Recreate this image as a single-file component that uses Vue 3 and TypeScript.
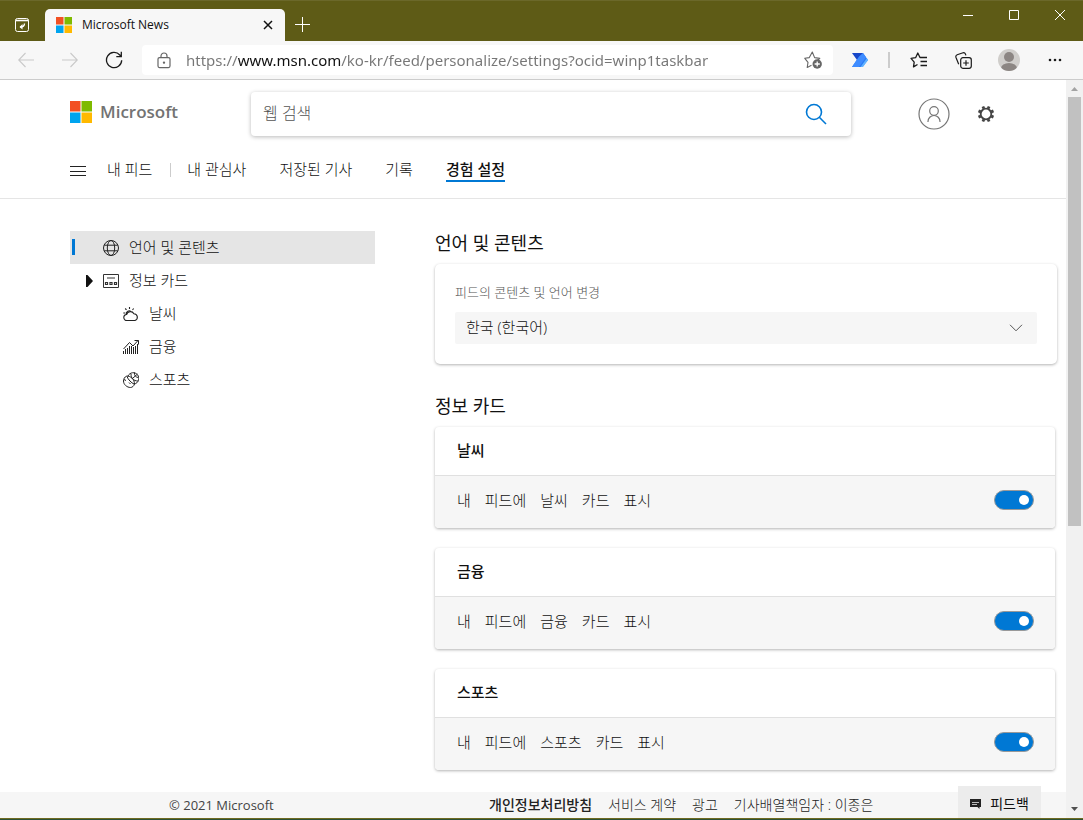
<script setup lang="ts">
import { ref } from 'vue'

interface InfoCard {
  id: string
  title: string
  words: string[]
  enabled: boolean
}

const address = ref('https://www.msn.com/ko-kr/feed/personalize/settings?ocid=winp1taskbar')
const query = ref('')
const region = ref('ko-kr')

const cards = ref<InfoCard[]>([
  { id: 'weather', title: '날씨', words: ['내', '피드에', '날씨', '카드', '표시'], enabled: true },
  { id: 'finance', title: '금융', words: ['내', '피드에', '금융', '카드', '표시'], enabled: true },
  { id: 'sports', title: '스포츠', words: ['내', '피드에', '스포츠', '카드', '표시'], enabled: true },
])
</script>

<template>
  <div class="window">
    <header class="titlebar">
      <button class="tab-actions" type="button" aria-label="탭 작업">
        <svg width="16" height="16" viewBox="0 0 16 16" fill="none" stroke="#fff">
          <rect x="1.5" y="1.5" width="13" height="13" rx="2" />
          <path d="M1.5 3.500h13" stroke-width="1.6" />
          <path d="M10.500 6.500q0 3.500-4.500 3.500" stroke-width="1.400" />
          <path d="M8.500 7 5.500 10l3 2.500z" fill="#fff" stroke="none" />
        </svg>
      </button>
      <div class="tab">
        <svg width="16" height="16" viewBox="0 0 16 16">
          <path fill="#f25022" d="M0 0h7.5v7.5H0z" /><path fill="#7fba00" d="M8.5 0H16v7.5H8.5z" />
          <path fill="#00a4ef" d="M0 8.5h7.5V16H0z" /><path fill="#ffb900" d="M8.5 8.5H16V16H8.5z" />
        </svg>
        <span class="tab-title">Microsoft News</span>
        <button type="button" class="tab-close" aria-label="탭 닫기">
          <svg width="10" height="10" viewBox="0 0 10 10" stroke="#111" stroke-width="1.5"><path d="m1 1 8 8M9 1 1 9" /></svg>
        </button>
      </div>
      <button type="button" class="new-tab" aria-label="새 탭">
        <svg width="15" height="15" viewBox="0 0 15 15" stroke="#fff"><path d="M7.5 0v15M0 7.5h15" /></svg>
      </button>
      <div class="window-controls">
        <button type="button" aria-label="최소화">
          <svg width="10" height="10" viewBox="0 0 10 10" stroke="#fff"><path d="M0 5.5h10" /></svg>
        </button>
        <button type="button" aria-label="최대화">
          <svg width="10" height="10" viewBox="0 0 10 10" stroke="#fff" fill="none"><path d="M.5.5h9v9h-9z" /></svg>
        </button>
        <button type="button" aria-label="닫기">
          <svg width="10" height="10" viewBox="0 0 10 10" stroke="#fff"><path d="m0 0 10 10M10 0 0 10" /></svg>
        </button>
      </div>
    </header>

    <div class="toolbar">
      <button type="button" class="tool" aria-label="뒤로" disabled>
        <svg width="16" height="16" viewBox="0 0 16 16" fill="none" stroke="#c9c9c9" stroke-width="1.1"><path d="M16 8H.8M7.5 1 .7 8l6.8 7" /></svg>
      </button>
      <button type="button" class="tool" aria-label="앞으로" disabled>
        <svg width="16" height="16" viewBox="0 0 16 16" fill="none" stroke="#c9c9c9" stroke-width="1.1"><path d="M0 8h15.2M8.5 1l6.8 7-6.8 7" /></svg>
      </button>
      <button type="button" class="tool" aria-label="새로 고침">
        <svg width="18" height="18" viewBox="0 0 18 18" fill="none" stroke="#1b1b1b" stroke-width="1.3"><path d="M16.7 9.3A7.6 7.6 0 1 1 14.8 4l1.2 1.4M16.3.8v4.9h-5" /></svg>
      </button>
      <div class="address">
        <svg width="14" height="17" viewBox="0 0 14 17" fill="none" stroke="#666" stroke-width="1.2">
          <rect x="1" y="5.6" width="12" height="10" rx="1.5" /><path d="M4 5.5V4a3 3 0 0 1 6 0v1.5" />
          <circle cx="7" cy="10.6" r=".6" fill="#444" />
        </svg>
        <input v-model="address" type="text" aria-label="주소" spellcheck="false" />
        <button type="button" class="favorite" aria-label="즐겨찾기에 추가">
          <svg width="18" height="18" viewBox="0 0 18 18" fill="none" stroke="#666" stroke-width="1.1">
            <path d="m7.5 14.3-4.3 2.2.8-5.1L.8 7.3l4.5-.7L8.3 1l2.3 5.6 5.2.8-2.2 1.8" stroke-linejoin="round" />
            <circle cx="13.2" cy="13" r="4.7" fill="#666" stroke="none" /><path d="M13.2 10.4v5.2M10.6 13h5.2" stroke="#fff" stroke-width="1.3" />
          </svg>
        </button>
      </div>
      <div class="tools-right">
        <button type="button" class="tool" aria-label="확장">
          <svg width="16" height="14" viewBox="0 0 16 14">
            <path fill="#2a7cf6" d="M4.7 7 8.5 0H11l5 7-5.5 7H0z" /><path fill="#62b3ff" d="m8.5 14 6.3-8.8L16 7l-5 7z" />
            <path fill="#1747c9" d="M0 0h11L8 4.5 5 7z" /><path fill="#3f8cff" d="m7 3.5 4-3.5 3 4.2L7 14H0z" />
          </svg>
        </button>
        <span class="separator"></span>
        <button type="button" class="tool" aria-label="즐겨찾기">
          <svg width="18" height="16" viewBox="0 0 18 16" fill="none" stroke="#1b1b1b" stroke-width="1.3" stroke-linejoin="round">
            <path d="m7.5 12.5-4 2.4.7-4.8L1 6.4l4.6-.7L7.8 1 10 5.5h7M10.5 9.5H17M10.5 13.5H17" />
          </svg>
        </button>
        <button type="button" class="tool" aria-label="컬렉션">
          <svg width="17" height="17" viewBox="0 0 17 17" fill="none" stroke="#1b1b1b" stroke-width="1.2">
            <rect x="5.7" y="5.7" width="10.6" height="10.6" rx="2.2" /><path d="M11 8.2v5.6M8.2 11h5.6" />
            <path d="M3.7 12.3 1 5.5Q.3 3.500 2.2 2.700L8 .8q1.700-.5 2.400 1.100l.5 1.500" />
          </svg>
        </button>
        <button type="button" class="tool wide" aria-label="프로필">
          <svg width="22" height="22" viewBox="0 0 22 22">
            <defs><clipPath id="avatar"><circle cx="11" cy="11" r="11" /></clipPath></defs>
            <g clip-path="url(#avatar)"><path fill="#d0cecb" d="M0 0h22v22H0z" /><circle cx="11" cy="8" r="5" fill="#8c8683" /><ellipse cx="11" cy="19.500" rx="8" ry="5.500" fill="#8c8683" /></g>
          </svg>
        </button>
        <button type="button" class="tool" aria-label="설정 및 기타">
          <svg width="14" height="4" viewBox="0 0 14 4" fill="#1b1b1b"><circle cx="2" cy="2" r="1.300" /><circle cx="7" cy="2" r="1.300" /><circle cx="12" cy="2" r="1.300" /></svg>
        </button>
      </div>
    </div>

    <div class="viewport">
      <div class="page">
        <header class="site-header">
          <div class="brand-row">
            <a class="brand" href="#">
              <svg width="22" height="22" viewBox="0 0 22 22">
                <path fill="#f25022" d="M0 0h10.500v10.500H0z" /><path fill="#7fba00" d="M11.500 0H22v10.500H11.500z" />
                <path fill="#00a4ef" d="M0 11.500h10.500V22H0z" /><path fill="#ffb900" d="M11.500 11.500H22V22H11.500z" />
              </svg>
              <span>Microsoft</span>
            </a>
            <form class="search" role="search" @submit.prevent>
              <input v-model="query" type="text" placeholder="웹 검색" aria-label="웹 검색" />
              <button type="submit" aria-label="검색">
                <svg width="22" height="22" viewBox="0 0 22 22" fill="none" stroke="#0078d4" stroke-width="1.600"><circle cx="9" cy="9" r="7.500" /><path d="m14.300 14.300 6.700 6.700" /></svg>
              </button>
            </form>
            <button type="button" class="account" aria-label="로그인">
              <svg width="32" height="32" viewBox="0 0 32 32" fill="none" stroke="#767676" stroke-width="1.200"><circle cx="16" cy="16" r="15" /><circle cx="16" cy="13" r="4.300" /><path d="M10 24v-.5a6 6 0 0 1 12 0v.5" /></svg>
            </button>
            <button type="button" class="gear" aria-label="설정">
              <svg width="18" height="18" viewBox="0 0 18 18" fill="none" stroke="#444">
                <circle cx="9" cy="9" r="5.300" stroke-width="1.800" />
                <path stroke-width="2.800" d="M14.200 11.100l2.300 1M11.100 14.200l1 2.300M6.900 14.200l-1 2.300M3.800 11.100l-2.300 1M3.800 6.900l-2.300-1M6.900 3.800l-1-2.300M11.100 3.800l1-2.300M14.200 6.900l2.300-1" />
              </svg>
            </button>
          </div>
          <nav class="site-nav">
            <button type="button" class="menu" aria-label="메뉴">
              <svg width="16" height="10" viewBox="0 0 16 10" stroke="#222"><path d="M0 .5h16M0 5.500h16M0 9.500h16" /></svg>
            </button>
            <a href="#" class="first">내 피드</a>
            <a href="#">내 관심사</a>
            <a href="#">저장된 기사</a>
            <a href="#">기록</a>
            <a href="#" class="current" aria-current="page">경험 설정</a>
          </nav>
        </header>

        <div class="body">
          <nav class="side">
            <a href="#" class="item selected">
              <svg width="16" height="16" viewBox="0 0 16 16" fill="none" stroke="#222"><circle cx="8" cy="8" r="7.500" /><ellipse cx="8" cy="8" rx="3.700" ry="7.500" /><path d="M1.200 5.200h13.600M1.200 10.800h13.600" /></svg>
              <span>언어 및 콘텐츠</span>
            </a>
            <a href="#" class="item expandable">
              <svg width="7" height="12" viewBox="0 0 7 12"><path fill="#111" d="M0 0h1.500L7 6l-5.500 6H0z" /></svg>
              <svg width="16" height="14" viewBox="0 0 16 14" fill="none" stroke="#333"><path d="M.5.5h15v13H.5zM4 4h8" /><path d="M2.500 8.500h2v2h-2zM7 8.500h2v2H7zM11.500 8.500h2v2h-2z" stroke-width="1.200" /></svg>
              <span>정보 카드</span>
            </a>
            <a href="#" class="item child">
              <svg width="16" height="16" viewBox="0 0 16 16" fill="none" stroke="#222" stroke-width="1.100"><path d="M4 14.500a3 3 0 0 1-.4-6 4 4 0 0 1 7.300-.8 3.500 3.500 0 0 1 1.100 6.800zM3.300 8.200a2.800 2.800 0 0 1 4.800-2.400M6.500 1v2M.3 7h2M2.200 2.500l1.300 1.300M10.700 2.500 9.500 3.800" /></svg>
              <span>날씨</span>
            </a>
            <a href="#" class="item child">
              <svg width="16" height="16" viewBox="0 0 16 16" fill="none" stroke="#222"><path d="M.5 15v-3M2.500 15v-5M4.500 15V9M6.500 15V7M8.500 15V7M10.500 15V8M12.500 15V7M14.500 15V5M.5 10 6.500 3.500l3.500 3.500L15 1.500M11.500 1.500h4v4" /></svg>
              <span>금융</span>
            </a>
            <a href="#" class="item child">
              <svg width="16" height="16" viewBox="0 0 16 16" fill="none" stroke="#222">
                <path d="M5 4a5.700 5.700 0 1 1 6.300 8" /><path d="M3.500 4.200C1.500 5 .5 7 .5 9c0 3.500 3.500 6.500 7 6.500 1.700 0 3.500-1.500 4-3.500C11.500 7.500 7.500 3.500 3.500 4.200zM4 4.500c1 3 4.500 6.500 7 7.500M1 7.500l2 1M6 10.500l1.500 1.500M9.500 6.500l5-4.500M8 2c0 4 2.500 7 7 7M11.500.5c-.5 3 1.500 5 4 5" />
              </svg>
              <span>스포츠</span>
            </a>
          </nav>

          <main class="settings">
            <section>
              <h2>언어 및 콘텐츠</h2>
              <div class="language">
                <label for="region">피드의 콘텐츠 및 언어 변경</label>
                <div class="select-box">
                  <select id="region" v-model="region">
                    <option value="ko-kr">한국 (한국어)</option>
                  </select>
                  <svg width="14" height="8" viewBox="0 0 14 8" fill="none" stroke="#555"><path d="m1 .8 6 6 6-6" /></svg>
                </div>
              </div>
            </section>
            <section class="info">
              <h2>정보 카드</h2>
              <div class="cards">
                <article v-for="card in cards" :key="card.id" class="card">
                  <h3>{{ card.title }}</h3>
                  <div class="card-row">
                    <label :for="card.id"><span v-for="word in card.words" :key="word">{{ word }}</span></label>
                    <input :id="card.id" v-model="card.enabled" type="checkbox" role="switch" />
                  </div>
                </article>
              </div>
            </section>
          </main>
        </div>

        <footer class="footer">
          <span class="copyright">© 2021 Microsoft</span>
          <a href="#" class="strong">개인정보처리방침</a>
          <a href="#">서비스 계약</a>
          <a href="#">광고</a>
          <a href="#">기사배열책임자 : 이종은</a>
        </footer>
        <button type="button" class="feedback">
          <svg width="11" height="10" viewBox="0 0 11 10"><path fill="#222" d="M0 0h11v8H9.500v2l-2-2H0z" /><path stroke="#bbb" d="M2 3.500h7M2 5.500h5" /></svg>
          <span>피드백</span>
        </button>
      </div>
      <div class="scrollbar" aria-hidden="true">
        <svg width="17" height="17" viewBox="0 0 17 17"><path fill="#a3a3a3" d="M5 11h7L8.500 7z" /></svg>
        <div class="track"><div class="thumb"></div></div>
        <svg width="17" height="17" viewBox="0 0 17 17"><path fill="#505050" d="M5 6h7l-3.500 4z" /></svg>
      </div>
    </div>
    <div class="edge"></div>
  </div>
</template>

<style>
body {
  margin: 0;
}
</style>

<style scoped>
.window {
  display: flex;
  flex-direction: column;
  height: 100vh;
  overflow: hidden;
  background: #fff;
  color: #111;
  font-family: "Open Sans", "Noto Sans CJK KR", sans-serif;
  font-size: 15px;
  font-weight: 300;
  line-height: 20px;
}
.window *,
.window *::before {
  box-sizing: border-box;
}
button,
input,
select {
  margin: 0;
  padding: 0;
  border: 0;
  background: none;
  color: inherit;
  font: inherit;
}
button {
  display: flex;
  align-items: center;
  justify-content: center;
}
a {
  color: inherit;
  text-decoration: none;
}
svg {
  display: block;
  flex: none;
}
.titlebar {
  display: flex;
  flex: none;
  height: 41px;
  background: #5e5b16;
  border-top: 1px solid #6b682a;
}
.tab-actions {
  width: 45px;
  padding: 7px 1px 0 0;
}
.tab {
  display: flex;
  align-items: center;
  width: 240px;
  height: 32px;
  margin-top: 8px;
  padding: 0 11px;
  border-radius: 5px 5px 0 0;
  background: #f7f7f7;
}
.tab-title {
  flex: 1;
  margin-left: 10px;
  font-size: 12px;
  font-weight: 400;
}
.tab-close {
  width: 12px;
  height: 20px;
}
.new-tab {
  width: 35px;
  padding-top: 6px;
}
.window-controls {
  display: flex;
  height: 28px;
  margin-left: auto;
}
.window-controls button {
  width: 46px;
}
.toolbar {
  display: flex;
  flex: none;
  align-items: center;
  height: 39px;
  padding: 0 6px 0 4px;
  border-bottom: 1px solid #ccc;
  background: #f7f7f7;
}
.tool {
  width: 44px;
  height: 30px;
}
.wide {
  width: 48px;
}
.address {
  display: flex;
  flex: 1;
  align-items: center;
  height: 30px;
  min-width: 0;
  margin: 0 5px 0 6px;
  padding: 0 10px 0 15px;
  border-radius: 4px;
  background: #fff;
}
.address input {
  flex: 1;
  min-width: 0;
  margin-left: 15px;
  background: linear-gradient(90deg, #767676 52px, #111 52px, #111 155px, #767676 155px);
  background-clip: text;
  color: transparent;
  font-family: "Noto Sans", "Open Sans", sans-serif;
  font-weight: 400;
}
.favorite {
  width: 20px;
}
.tools-right {
  display: flex;
  align-items: center;
}
.separator {
  width: 2px;
  height: 16px;
  margin: 0 7px 0 6px;
  background: #ccc;
}
.viewport {
  display: flex;
  flex: 1;
  min-height: 0;
}
.page {
  position: relative;
  display: flex;
  flex: 1;
  flex-direction: column;
  min-width: 0;
}
.site-header {
  flex: none;
  padding: 12px 68px 0 70px;
  border-bottom: 1px solid #e5e5e5;
}
.brand-row {
  display: flex;
  align-items: center;
}
.brand {
  display: flex;
  gap: 8px;
  width: 181px;
  padding-bottom: 4px;
  color: #737373;
  font-size: 17px;
  font-weight: 600;
  line-height: 22px;
}
.search {
  display: flex;
  flex: 0 1 600px;
  height: 44px;
  margin-right: 67px;
  padding: 0 24px 0 12px;
  border-radius: 4px;
  box-shadow: 0 1px 4px rgba(0, 0, 0, 0.28);
}
.search input {
  flex: 1;
  min-width: 0;
  padding-bottom: 2px;
  font-size: 16px;
}
.search input::placeholder {
  color: #555;
}
.gear {
  width: 24px;
  margin-left: 24px;
}
.site-nav {
  display: flex;
  align-items: center;
  gap: 33px;
  height: 62px;
  padding-top: 7px;
}
.site-nav a {
  padding-bottom: 1px;
  border-bottom: 2px solid transparent;
}
.menu {
  width: 16px;
  margin-right: -12px;
}
.site-nav .first {
  position: relative;
  margin-right: 2px;
}
.first::after {
  position: absolute;
  top: 4px;
  right: -19px;
  width: 1px;
  height: 14px;
  background: #ccc;
  content: "";
}
.site-nav .current {
  border-color: #0078d4;
  font-weight: 500;
}
.body {
  display: flex;
  flex: 1;
  gap: 60px;
  min-height: 0;
  padding: 32px 9px 0 70px;
  overflow: hidden;
}
.side {
  flex: 0 0 305px;
}
.item {
  display: flex;
  align-items: center;
  gap: 10px;
  height: 33px;
  padding-left: 33px;
}
.item span {
  padding-bottom: 2px;
}
.selected {
  position: relative;
  background: #e5e5e5;
}
.selected::before {
  position: absolute;
  top: 8px;
  left: 2px;
  width: 3px;
  height: 16px;
  background: #0078d4;
  content: "";
}
.expandable {
  padding-left: 16px;
}
.child {
  padding-left: 53px;
}
.settings {
  flex: 1;
  min-width: 0;
}
h2 {
  margin: 0 0 8px;
  font-size: 18px;
  font-weight: 400;
  line-height: 25px;
}
.language {
  height: 100px;
  padding: 18px 20px;
  border-radius: 5px;
  box-shadow: 0 1px 3px rgba(0, 0, 0, 0.3);
}
.language label {
  display: block;
  margin-bottom: 10px;
  color: #555;
  font-size: 13px;
}
.select-box {
  display: grid;
  align-items: center;
}
.select-box > * {
  grid-area: 1 / 1;
}
.select-box select {
  width: 100%;
  height: 32px;
  padding: 0 0 2px 11px;
  border-radius: 2px;
  background: #f6f6f6;
  appearance: none;
}
.select-box svg {
  justify-self: end;
  margin-right: 14px;
  pointer-events: none;
}
.info {
  padding: 30px 2px 0 0;
}
.cards {
  display: grid;
  gap: 20px;
}
.card {
  overflow: hidden;
  border-radius: 4px;
  box-shadow: 0 1px 3px rgba(0, 0, 0, 0.3);
}
h3 {
  margin: 0;
  padding: 13px 22px 15px;
  font-size: 15px;
  font-weight: 500;
  line-height: 20px;
}
.card-row {
  display: flex;
  align-items: center;
  justify-content: space-between;
  height: 53px;
  padding: 0 21px 4px 22px;
  border-top: 1px solid #e0e0e0;
  background: #f6f6f6;
}
.card-row label {
  display: flex;
  gap: 14px;
}
.card-row input {
  display: flex;
  align-items: center;
  width: 40px;
  height: 20px;
  padding: 0 4px;
  border: 1px solid #999;
  border-radius: 10px;
  background: #fff;
  appearance: none;
}
.card-row input::before {
  width: 10px;
  height: 10px;
  border-radius: 50%;
  background: #666;
  content: "";
}
.card-row input:checked {
  justify-content: flex-end;
  background: #0078d4;
}
.card-row input:checked::before {
  background: #fff;
}
.footer {
  display: flex;
  flex: none;
  align-items: center;
  gap: 16px;
  height: 26px;
  padding-left: 169px;
  background: #f6f6f6;
  color: #222;
  font-size: 14px;
}
.copyright {
  width: 304px;
  color: #444;
  font-size: 13px;
  font-weight: 400;
}
.strong {
  font-weight: 500;
}
.feedback {
  position: absolute;
  right: 25px;
  bottom: 0;
  gap: 9px;
  width: 83px;
  height: 32px;
  padding-top: 3px;
  background: #ececec;
  font-size: 14px;
  font-weight: 400;
}
.scrollbar {
  display: flex;
  flex: none;
  flex-direction: column;
  width: 17px;
  background: #f1f1f1;
}
.track {
  flex: 1;
  padding: 0 2px;
}
.thumb {
  height: 61%;
  background: #c1c1c1;
}
.edge {
  flex: none;
  height: 2px;
  border-top: 1px solid #6e6a20;
  background: #2d5136;
}
</style>
